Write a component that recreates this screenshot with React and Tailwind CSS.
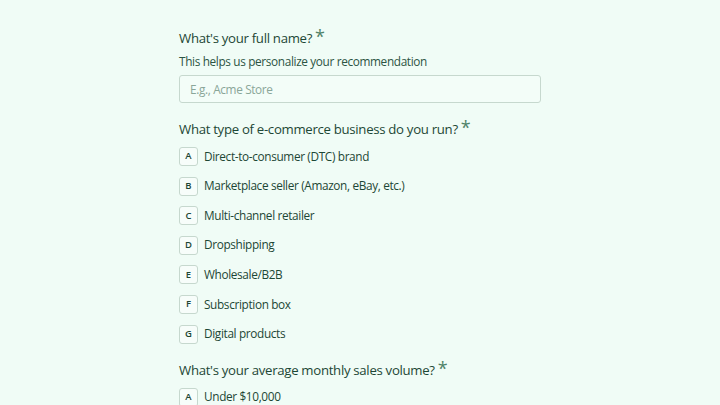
import React from "react";

const businessTypes = [
  { key: "A", label: "Direct-to-consumer (DTC) brand" },
  { key: "B", label: "Marketplace seller (Amazon, eBay, etc.)" },
  { key: "C", label: "Multi-channel retailer" },
  { key: "D", label: "Dropshipping" },
  { key: "E", label: "Wholesale/B2B" },
  { key: "F", label: "Subscription box" },
  { key: "G", label: "Digital products" },
];

const salesVolumes = [{ key: "A", label: "Under $10,000" }];

const Question = ({ children }) => (
  <h2 className="flex items-start h-[20px] leading-[20px] text-[13.2px] font-medium tracking-[-0.3px] text-[#1d4735]">
    <span>{children}</span>
    <span className="ml-[3px] text-[18px] leading-[16px] text-[#4f8268]">*</span>
  </h2>
);

const Option = ({ letter, label }) => (
  <button className="flex items-center h-[19px] text-left">
    <span className="flex items-center justify-center w-[19px] h-[19px] rounded-[3px] border border-[#c6d8ce] bg-[#f7fdfa] text-[9.5px] font-semibold text-[#1d4735]">
      {letter}
    </span>
    <span className="ml-[6px] text-[11.8px] tracking-[-0.35px] text-[#1d4735]">{label}</span>
  </button>
);

const App = () => {
  return (
    <div
      className="min-h-screen h-[405px] overflow-hidden bg-[#f0fcf6]"
      style={{ fontFamily: "'Open Sans', Lato, sans-serif" }}
    >
      <div className="w-[362px] mx-auto pt-[28px] flex flex-col">
        {/* 이름 */}
        <Question>What's your full name?</Question>
        <p className="mt-[4px] h-[18px] leading-[18px] text-[11.8px] tracking-[-0.35px] text-[#2c5443]">
          This helps us personalize your recommendation
        </p>
        <input
          type="text"
          placeholder="E.g., Acme Store"
          className="mt-[5px] h-[28px] w-full rounded-[3px] border border-[#c6d8ce] bg-[#f3fdf8] px-[10px] text-[11.8px] tracking-[-0.35px] text-[#1d4735] placeholder:text-[#8aa699] outline-none"
        />

        {/* 비즈니스 유형 */}
        <div className="mt-[16px]">
          <Question>What type of e-commerce business do you run?</Question>
        </div>
        <div className="mt-[8px] flex flex-col gap-[10.6px]">
          {businessTypes.map((o) => (
            <Option key={o.key} letter={o.key} label={o.label} />
          ))}
        </div>

        {/* 월 매출 */}
        <div className="mt-[16px]">
          <Question>What's your average monthly sales volume?</Question>
        </div>
        <div className="mt-[8px] flex flex-col gap-[10.6px]">
          {salesVolumes.map((o) => (
            <Option key={o.key} letter={o.key} label={o.label} />
          ))}
        </div>
      </div>
    </div>
  );
};

export default App;
